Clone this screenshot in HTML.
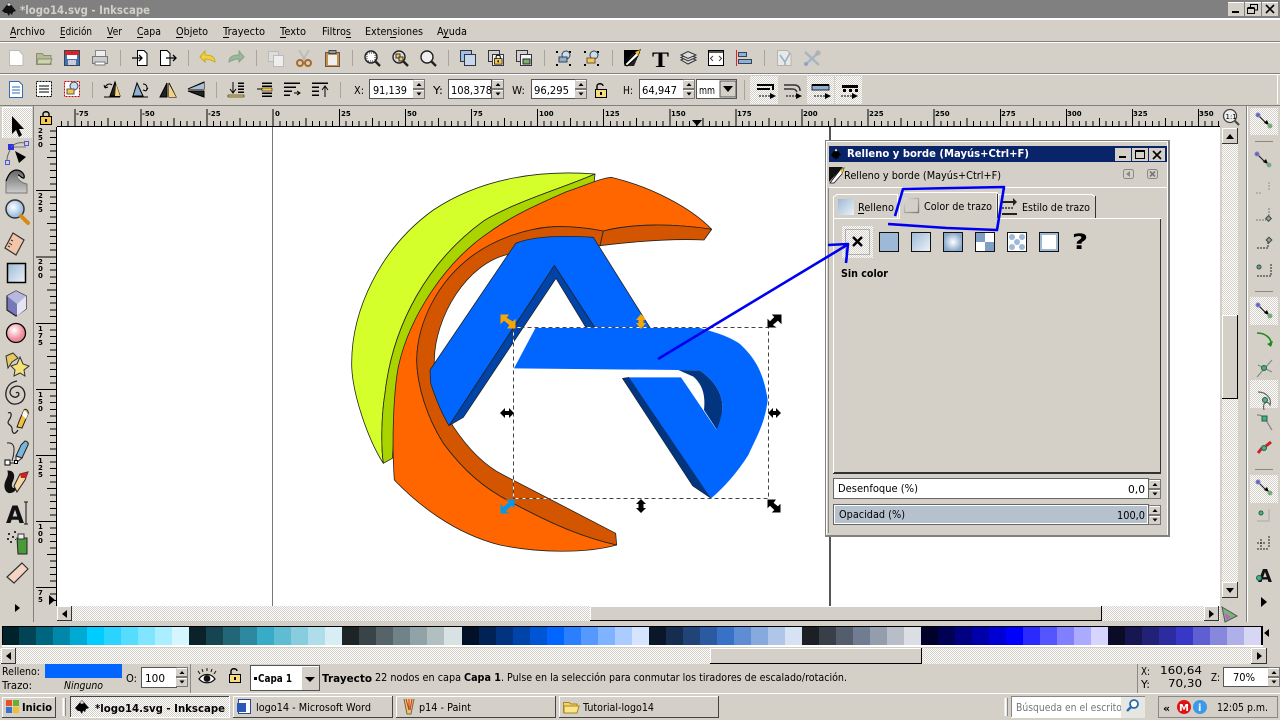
<!DOCTYPE html>
<html><head><meta charset="utf-8"><style>
html,body{margin:0;padding:0;width:1280px;height:720px;overflow:hidden;background:#d4d0c8}
svg{display:block}
text{font-family:"DejaVu Sans","Liberation Sans",sans-serif;font-size:10.5px;fill:#000;white-space:pre}
.b{font-weight:bold}
.c{shape-rendering:crispEdges}
.r{font-size:7px;font-weight:bold}
</style></head><body>
<svg width="1280" height="720" viewBox="0 0 1280 720" xmlns="http://www.w3.org/2000/svg">
<defs>
<pattern id="h" width="2" height="2" patternUnits="userSpaceOnUse"><rect width="2" height="2" fill="#fff"/><rect width="1" height="1" fill="#d4d0c8"/><rect x="1" y="1" width="1" height="1" fill="#d4d0c8"/></pattern>
<linearGradient id="g1" x1="0" y1="0" x2="1" y2="1"><stop offset="0" stop-color="#9db9d6"/><stop offset="1" stop-color="#eef3f8"/></linearGradient>
<linearGradient id="g2" x1="0" y1="0" x2="0" y2="1"><stop offset="0" stop-color="#666"/><stop offset="1" stop-color="#ccc"/></linearGradient>
<linearGradient id="g3" x1="0" y1="0" x2="1" y2="1"><stop offset="0" stop-color="#ddd"/><stop offset="1" stop-color="#777"/></linearGradient>
<radialGradient id="g4"><stop offset="0" stop-color="#fff"/><stop offset="1" stop-color="#88a8cc"/></radialGradient>
<radialGradient id="g5" cx=".4" cy=".35"><stop offset="0" stop-color="#fff"/><stop offset="1" stop-color="#f08a98"/></radialGradient>
<radialGradient id="g6" cx=".4" cy=".4"><stop offset="0" stop-color="#fff"/><stop offset="1" stop-color="#9fc0e4"/></radialGradient>
<clipPath id="ct"><rect x="57" y="106" width="1163" height="21"/></clipPath>
<clipPath id="cl"><rect x="34" y="127" width="23" height="479"/></clipPath>
<clipPath id="cy"><rect x="449" y="81" width="42" height="17"/></clipPath>
<clipPath id="cs"><rect x="1012" y="697" width="109" height="20"/></clipPath>
<g id="tt"><path class="c" stroke="#000" fill="none" d="M0.5 109V127M7.1 121V127M13.7 121V127M20.3 121V127M27 121V127M33.5 118V127M40 121V127M46.7 121V127M53.3 121V127M59.9 121V127"/></g>
<g id="tl"><path class="c" stroke="#000" fill="none" d="M36 .5H56M50 7.1H56M50 13.7H56M50 20.3H56M50 27H56M47 33.5H56M50 40H56M50 46.7H56M50 53.3H56M50 59.9H56"/></g>
<g id="sp"><rect width="12" height="20" fill="#d4d0c8"/><path d="M0 .5H11.500V9.500H0M0 10.500H11.500V19.500H0" fill="none" stroke="#777"/><path d="M1 1.500H11M1 11.500H11" stroke="#fff"/><path d="M3.500 7L6 4L8.500 7ZM3.500 13.500L6 16.500L8.500 13.500Z" fill="#000"/></g>
<g id="npo"><path d="M-5 -4L3 4" stroke="#222" stroke-width="1.200" fill="none"/><path d="M0 3L5 5L3 0Z" fill="#000"/><circle cx="-6" cy="-5" r="2" fill="#5a5af0" stroke="#88a"/><circle cx="6" cy="6" r="2" fill="#6ab06a" stroke="#8a8"/></g>
<g id="lock"><path d="M3 7V4C3 1 9 1 9 4V7" fill="none" stroke="#000" stroke-width="1.400"/><rect x=".5" y="6.500" width="11" height="8" fill="#f4c850" stroke="#000"/><rect x="5" y="9" width="2" height="3" fill="#000"/></g>
<g id="olk"><path d="M2 7V3C2 0 8 0 8 3" fill="none" stroke="#000" stroke-width="1.400"/><rect x=".5" y="6.500" width="11" height="8" fill="#f6dc7c" stroke="#000"/><rect x="5" y="9" width="2" height="3" fill="#000"/></g>
</defs>

<!-- title bar -->
<rect class="c" width="1280" height="18" fill="#808080"/>
<rect class="c" y="18" width="1280" height="2" fill="#fff"/>
<path d="M2 11L9 2L16 11L13 12L12 15L10 13L9 16L7 13L5 13Z" fill="#111"/><path d="M7 5L9 2.500L11 5L9 6Z" fill="#ddd"/>
<text x="20" y="14" class="b" style="font-size:11.5px;fill:#d4d0c8" textLength="130" lengthAdjust="spacingAndGlyphs">*logo14.svg - Inkscape</text>
<g class="c">
<rect x="1228" y="2" width="16" height="14" fill="#d4d0c8"/><rect x="1228" y="2" width="16" height="1" fill="#fff"/><rect x="1232" y="11" width="7" height="2" fill="#000"/>
<rect x="1245" y="2" width="16" height="14" fill="#d4d0c8"/><rect x="1245" y="2" width="16" height="1" fill="#fff"/>
<path d="M1250.500 8V4.500H1257.500V10H1255M1247.500 8.500H1254.500V13.500H1247.500ZM1247.500 7.500H1254.500" fill="none" stroke="#000"/>
<rect x="1262" y="2" width="16" height="14" fill="#d4d0c8"/><rect x="1262" y="2" width="16" height="1" fill="#fff"/></g>
<path d="M1266 5L1274 13M1274 5L1266 13" stroke="#000" stroke-width="1.600"/>

<!-- menu -->
<g>
<text x="10" y="35" textLength="35" lengthAdjust="spacingAndGlyphs">Archivo</text>
<text x="60" y="35" textLength="32" lengthAdjust="spacingAndGlyphs">Edición</text>
<text x="107" y="35" textLength="15" lengthAdjust="spacingAndGlyphs">Ver</text>
<text x="137" y="35" textLength="24" lengthAdjust="spacingAndGlyphs">Capa</text>
<text x="176" y="35" textLength="32" lengthAdjust="spacingAndGlyphs">Objeto</text>
<text x="223" y="35" textLength="42" lengthAdjust="spacingAndGlyphs">Trayecto</text>
<text x="280" y="35" textLength="26" lengthAdjust="spacingAndGlyphs">Texto</text>
<text x="322" y="35" textLength="29" lengthAdjust="spacingAndGlyphs">Filtros</text>
<text x="365" y="35" textLength="58" lengthAdjust="spacingAndGlyphs">Extensiones</text>
<text x="437" y="35" textLength="30" lengthAdjust="spacingAndGlyphs">Ayuda</text>
<path class="c" stroke="#000" d="M10 37.500H16M60 37.500H65M107 37.500H113M137 37.500H143M176 37.500H183M223 37.500H229M280 37.500H286M346 37.500H351M390 37.500H396M443 37.500H449"/>
</g>
<rect class="c" y="41" width="1280" height="1" fill="#808080"/><rect class="c" y="42" width="1280" height="1" fill="#fff"/>
<rect class="c" y="73" width="1280" height="1" fill="#808080"/><rect class="c" y="74" width="1280" height="1" fill="#fff"/>
<rect class="c" y="105" width="1280" height="1" fill="#808080"/>
<rect class="c" x="1277" y="75" width="1" height="29" fill="#fff"/>

<!-- toolbar 1 -->
<path class="c" stroke="#a8a49c" d="M120.500 50V66M188.500 50V66M256.500 50V66M352.500 50V66M448.500 50V66M544.500 50V66M612.500 50V66M764.500 50V66"/>
<path d="M9.500 50.500H19L23 55V65.500H9.500Z" fill="#fff" stroke="#bbb"/>
<path d="M36.500 53.500H42L44 55.500H51V64.500H36.500Z" fill="#b3bb92" stroke="#8a8f70"/><path d="M38 59H52L50 64H37Z" fill="#cfd4b0" stroke="#8a8f70"/>
<rect x="64.500" y="50.500" width="15" height="15" fill="#3f74b4" stroke="#345"/><rect x="65" y="51" width="14" height="4" fill="#d22"/><rect x="67" y="55" width="10" height="4" fill="#fff"/><rect x="68" y="60" width="8" height="5" fill="#ccd"/>
<rect x="95.500" y="50.500" width="10" height="6" fill="#eee" stroke="#888"/><rect x="92.500" y="56.500" width="15" height="7" fill="#ccc" stroke="#777"/><rect x="95" y="62" width="10" height="3" fill="#fff" stroke="#777"/>
<path d="M137.500 50.500H144L147 53.500V65.500H137.500Z" fill="#fff" stroke="#000"/><path d="M132 58H142M139 55L142 58L139 61" fill="none" stroke="#000" stroke-width="1.300"/>
<path d="M160.500 50.500H167L170 53.500V65.500H160.500Z" fill="#fff" stroke="#000"/><path d="M166 58H176M173 55L176 58L173 61" fill="none" stroke="#000" stroke-width="1.300"/>
<path d="M215 62C215 56 210 55 205 55V51L200 57L205 62V59C209 59 211 60 215 62Z" fill="#f2d23c" stroke="#c8aa26"/>
<path d="M229 62C229 56 234 55 239 55V51L244 57L239 62V59C235 59 233 60 229 62Z" fill="#9ab89a" stroke="#88a088"/>
<rect x="268.500" y="51.500" width="10" height="10" fill="#ddd" stroke="#bbb"/><rect x="273.500" y="55.500" width="10" height="11" fill="#eee" stroke="#bbb"/>
<path d="M299 50L305 60M309 50L303 60" stroke="#b8b8b8" stroke-width="1.600"/><circle cx="300" cy="63" r="3" fill="none" stroke="#a86a22" stroke-width="2"/><circle cx="308" cy="63" r="3" fill="none" stroke="#a86a22" stroke-width="2"/>
<rect x="325.500" y="52.500" width="14" height="14" fill="#c49050" stroke="#654"/><rect x="328" y="55" width="9" height="10" fill="#eee"/><rect x="329" y="50.500" width="7" height="3" fill="#999" stroke="#444"/>
<g fill="none" stroke="#222"><circle cx="371" cy="57" r="6" fill="#ddd" stroke-width="1.400"/><path d="M375 61L380 66" stroke-width="2.400"/><circle cx="399" cy="57" r="6" fill="#ddd" stroke-width="1.400"/><path d="M403 61L408 66" stroke-width="2.400"/><circle cx="427" cy="57" r="6" fill="#eee" stroke-width="1.400"/><path d="M431 61L436 66" stroke-width="2.400"/></g>
<rect x="396" y="54" width="4" height="4" fill="#f4c850" stroke="#333"/><rect x="399" y="57" width="4" height="4" fill="#f4c850" stroke="#333"/><rect x="367" y="53" width="8" height="8" fill="#fff" stroke="#333" stroke-dasharray="1 1"/>
<rect x="460.500" y="50.500" width="11" height="11" fill="#9fc0e0" stroke="#334"/><rect x="464.500" y="54.500" width="11" height="11" fill="#c5d8ec" stroke="#334"/>
<rect x="488.500" y="50.500" width="11" height="11" fill="#d4d0c8" stroke="#334"/><rect x="492.500" y="54.500" width="11" height="11" fill="#f4f4f4" stroke="#334"/><use href="#lock" transform="translate(494 54) scale(.7)"/>
<rect x="516.500" y="50.500" width="11" height="11" fill="#d4d0c8" stroke="#334"/><rect x="520.500" y="54.500" width="11" height="11" fill="#f4f4f4" stroke="#334"/><rect x="523" y="59" width="7" height="5" fill="#7cb06c" stroke="#222"/>
<path class="c" fill="#000" d="M556 51h2v2h-2zM569 51h2v2h-2zM556 64h2v2h-2zM569 64h2v2h-2zM584 51h2v2h-2zM597 51h2v2h-2zM584 64h2v2h-2zM597 64h2v2h-2z"/>
<circle cx="566" cy="55" r="4" fill="#cde" stroke="#345"/><rect x="559" y="57" width="8" height="5" fill="#8fb0d0" stroke="#345"/>
<circle cx="594" cy="55" r="4" fill="#cde" stroke="#345"/><rect x="587" y="58" width="8" height="5" fill="#f4c850" stroke="#654"/>
<path d="M624 50H640L624 65Z" fill="#000"/><path d="M624 66H634L640 52L632 54Z" fill="#222"/><path d="M625 64L637 52L640 50L638 56L627 66Z" fill="#fff" stroke="#000"/><path d="M635 52L640 50L638 56Z" fill="#f0c030"/>
<text x="652" y="67" style="font-family:'Liberation Serif',serif;font-size:22px;font-weight:bold" textLength="17" lengthAdjust="spacingAndGlyphs">T</text>
<g fill="#ddd" stroke="#333"><path d="M681 60L688 56.500L696 60L688 64Z"/><path d="M681 57.500L688 54L696 57.500L688 61Z"/><path d="M681 55L688 51.500L696 55L688 58.500Z"/></g>
<rect x="708.500" y="50.500" width="15" height="15" fill="#fff" stroke="#000"/><rect x="709" y="51" width="14" height="2" fill="#555"/><path d="M713 56L710.500 58.500L713 61M719 56L721.500 58.500L719 61" fill="none" stroke="#444"/>
<rect class="c" x="736" y="50" width="1" height="16" fill="#d22"/><rect x="738.500" y="52.500" width="8" height="4" fill="#8fb0d8" stroke="#345"/><rect x="738.500" y="59.500" width="13" height="4" fill="#8fb0d8" stroke="#345"/>
<path d="M777.500 50.500H787L791 54V65.500H777.500Z" fill="#e8e8e4" stroke="#b4b4b4"/><path d="M780 55L785 62V65M790 53L785 62" stroke="#9ab0c4" stroke-width="1.600" fill="none"/>
<path d="M805 52L819 65M819 52L805 65" stroke="#a8b4c4" stroke-width="2.400"/><circle cx="806" cy="64" r="2" fill="#8aa4cc"/><circle cx="818" cy="53" r="2" fill="none" stroke="#aaa"/>

<!-- toolbar 2 -->
<path class="c" stroke="#a8a49c" d="M92.500 82V98M216.500 82V98M340.500 82V98M744.500 80V100"/>
<path d="M9.500 81.500H19L22.500 85V97.500H9.500Z" fill="#fff" stroke="#3a6ab0"/><path d="M12 87H20M12 90H20M12 93H20" stroke="#2a6ac0"/>
<rect x="36.500" y="81.500" width="15" height="15" fill="#fff" stroke="#000" stroke-dasharray="2 1"/><path d="M39 86H49M39 89H49M39 92H49" stroke="#555" stroke-width="1.500"/>
<rect x="64.500" y="81.500" width="15" height="15" fill="#fff" stroke="#c00" stroke-dasharray="2 1"/><circle cx="74" cy="86" r="4" fill="#cde" stroke="#345"/><rect x="67" y="89" width="7" height="5" fill="#f4c850" stroke="#654"/>
<path d="M110 96H120L115 82ZM104 97H120" fill="#222" stroke="#000"/><path d="M115 96H120L116 84Z" fill="#f4d27c"/><path d="M105 88C106 84 110 83 112 85M105 88L104 85M105 88L108 87" fill="none" stroke="#000"/>
<path d="M133 96H143L137 83ZM132 97H148" fill="#8fb0d0" stroke="#000"/><path d="M143 84C147 84 148 88 146 91M146 91L143 90M146 91L148 88" fill="none" stroke="#000"/>
<path d="M167 83V97H160ZM169 83V97H176Z" fill="#222" stroke="#000"/><path d="M169 84V97H176Z" fill="#f4d27c"/>
<path d="M204 82V89H188ZM204 91V97L188 91Z" fill="#222" stroke="#000"/><path d="M204 83V89H189Z" fill="#a8c0d8"/>
<path class="c" stroke="#000" stroke-width="1.500" d="M238 83H244M238 86H244M238 89H244M238 92H244"/><path d="M233 82V92M230 89L233 93L236 89" fill="none" stroke="#000"/><rect x="228" y="95" width="16" height="2" fill="#f4c850" stroke="#000" stroke-width=".5"/>
<path class="c" stroke="#000" stroke-width="1.500" d="M262 83H272M262 86H272M262 93H272M262 96H272"/><path d="M257 89H266" stroke="#000"/><rect x="262" y="88" width="10" height="3" fill="#f4c850" stroke="#000" stroke-width=".5"/>
<path class="c" stroke="#000" stroke-width="1.500" d="M284 83H300M284 87H296M284 91H292M284 95H290"/><path d="M294 93H299M297 91L300 93L297 95" fill="none" stroke="#000"/>
<path class="c" stroke="#000" stroke-width="1.500" d="M312 83H328M312 87H319M312 91H319M312 95H319"/><path d="M325 87V97M322 90L325 86L328 90" fill="none" stroke="#000"/>
<text x="354" y="94" textLength="10" lengthAdjust="spacingAndGlyphs">X:</text>
<text x="433" y="94" textLength="10" lengthAdjust="spacingAndGlyphs">Y:</text>
<text x="512" y="94" textLength="13" lengthAdjust="spacingAndGlyphs">W:</text>
<text x="623" y="94" textLength="10" lengthAdjust="spacingAndGlyphs">H:</text>
<g class="c" fill="#fff" stroke="#555"><rect x="369.500" y="79.500" width="44" height="19"/><rect x="448.500" y="79.500" width="43" height="19"/><rect x="531.500" y="79.500" width="44" height="19"/><rect x="639.500" y="79.500" width="44" height="19"/><rect x="696.500" y="79.500" width="40" height="19"/></g>
<text x="373" y="94" textLength="34" lengthAdjust="spacingAndGlyphs">91,139</text>
<text x="451" y="94" clip-path="url(#cy)" textLength="41" lengthAdjust="spacingAndGlyphs">108,378</text>
<text x="534" y="94" textLength="35" lengthAdjust="spacingAndGlyphs">96,295</text>
<text x="642" y="94" textLength="35" lengthAdjust="spacingAndGlyphs">64,947</text>
<text x="699" y="94" textLength="16" lengthAdjust="spacingAndGlyphs">mm</text>
<use href="#sp" x="413" y="79"/><use href="#sp" x="492" y="79"/><use href="#sp" x="575" y="79"/><use href="#sp" x="683" y="79"/>
<use href="#olk" x="595" y="83"/>
<rect class="c" x="720" y="81" width="16" height="16" fill="#d4d0c8" stroke="#555"/><path d="M723 86H733L728 92Z" fill="#000"/>
<g class="c"><rect x="750" y="76" width="28" height="28" fill="url(#h)"/><rect x="807" y="76" width="27" height="28" fill="url(#h)"/><rect x="835" y="76" width="27" height="28" fill="url(#h)"/></g>
<g fill="none" stroke="#000" stroke-width="2"><path d="M757 85H773V90M757 89H770"/><path d="M784 85H794C798 85 800 87 800 91" stroke-width="1.500" stroke="#333"/><path d="M784 89H792C795 89 796 90 797 92" stroke-width="1.500" stroke="#333"/></g>
<path d="M812 85H829V90H812Z" fill="#8fb0d0" stroke="#223"/><path d="M812 85H829" stroke="#000" stroke-width="2"/>
<path d="M842 85H858V88H842Z" fill="#000"/><path class="c" fill="#000" d="M843 89h3v3h-3zM849 89h3v3h-3zM855 89h3v3h-3z"/>
<path class="c" stroke="#000" stroke-dasharray="2 1" d="M759 96H771M786 96H798M814 96H826M841 96H853"/>
<path d="M770 93L776 96L770 99ZM796 93L802 96L796 99ZM825 93L831 96L825 99ZM852 93L858 96L852 99Z" fill="#000"/>

<!-- canvas -->
<rect class="c" x="57" y="127" width="1163" height="479" fill="#fff"/>
<rect class="c" x="272" y="127" width="1" height="479" fill="#777"/>
<rect class="c" x="829" y="127" width="2" height="479" fill="#555"/>

<!-- rulers -->
<g clip-path="url(#ct)">
<use href="#tt" x="8.300"/><use href="#tt" x="74.400"/><use href="#tt" x="140.500"/><use href="#tt" x="206.600"/><use href="#tt" x="272.700"/><use href="#tt" x="338.800"/><use href="#tt" x="404.900"/><use href="#tt" x="471"/><use href="#tt" x="537.100"/><use href="#tt" x="603.200"/><use href="#tt" x="669.300"/><use href="#tt" x="735.400"/><use href="#tt" x="801.500"/><use href="#tt" x="867.600"/><use href="#tt" x="933.700"/><use href="#tt" x="999.800"/><use href="#tt" x="1065.900"/><use href="#tt" x="1132"/><use href="#tt" x="1198.100"/>
<g class="r">
<text x="76" y="116" class="r">-75</text><text x="142" y="116" class="r">-50</text><text x="208" y="116" class="r">-25</text><text x="275" y="116" class="r">0</text><text x="341" y="116" class="r">25</text><text x="407" y="116" class="r">50</text><text x="473" y="116" class="r">75</text><text x="539" y="116" class="r">100</text><text x="605" y="116" class="r">125</text><text x="671" y="116" class="r">150</text><text x="737" y="116" class="r">175</text><text x="803" y="116" class="r">200</text><text x="869" y="116" class="r">225</text><text x="935" y="116" class="r">250</text><text x="1001" y="116" class="r">275</text><text x="1067" y="116" class="r">300</text><text x="1133" y="116" class="r">325</text><text x="1199" y="116" class="r">350</text>
</g></g>
<rect class="c" x="57" y="126" width="1163" height="1" fill="#000"/>
<path d="M692 120H702L697 126Z" fill="#000"/>
<rect class="c" x="33" y="106" width="1" height="516" fill="#808080"/>
<g clip-path="url(#cl)">
<use href="#tl" y="124"/><use href="#tl" y="190"/><use href="#tl" y="256.500"/><use href="#tl" y="323"/><use href="#tl" y="389"/><use href="#tl" y="455"/><use href="#tl" y="521"/><use href="#tl" y="587"/>
<text class="r" x="38" y="133">2<tspan x="38" dy="7">5</tspan><tspan x="38" dy="7">0</tspan></text>
<text class="r" x="38" y="198">2<tspan x="38" dy="7">2</tspan><tspan x="38" dy="7">5</tspan></text>
<text class="r" x="38" y="264">2<tspan x="38" dy="7">0</tspan><tspan x="38" dy="7">0</tspan></text>
<text class="r" x="38" y="331">1<tspan x="38" dy="7">7</tspan><tspan x="38" dy="7">5</tspan></text>
<text class="r" x="38" y="397">1<tspan x="38" dy="7">5</tspan><tspan x="38" dy="7">0</tspan></text>
<text class="r" x="38" y="463">1<tspan x="38" dy="7">2</tspan><tspan x="38" dy="7">5</tspan></text>
<text class="r" x="38" y="529">1<tspan x="38" dy="7">0</tspan><tspan x="38" dy="7">0</tspan></text>
<text class="r" x="38" y="595">7<tspan x="38" dy="7">5</tspan></text>
</g>
<rect class="c" x="56" y="127" width="1" height="479" fill="#000"/>
<path d="M49 595L55 600L49 605Z" fill="#000"/>
<use href="#lock" x="40" y="110"/>

<!-- left toolbox -->
<rect class="c" x="2" y="107" width="30" height="31" fill="url(#h)"/>
<path class="c" stroke="#fff" fill="none" d="M2.500 138V107.500H32"/>
<path d="M12 116V134L16 130L19 137L22 135L19 129H24Z" fill="#000"/>
<path d="M11 147H26" stroke="#777" fill="none"/><rect x="8" y="144" width="6" height="6" fill="#3030e0"/><rect x="24.500" y="141.500" width="4" height="4" fill="none" stroke="#5555e0"/><rect x="5.500" y="160.500" width="4" height="4" fill="none" stroke="#5555e0"/><path d="M10 150C8 154 7 157 7 160M11 147C15 143 20 142 25 143" fill="none" stroke="#666"/><path d="M15 151L26 157L19 163Z" fill="#000"/>
<path d="M6 193V181C8 176 10 171 16 170C22 170 25 175 24 178C22 179 20 175 18 175C15 176 20 183 27 184V193Z" fill="url(#g2)" stroke="#777"/><path d="M6 181C8 176 10 171 16 170C22 170 25 175 24 178C22 179 20 175 18 175" fill="none" stroke="#000" stroke-width="1.200"/>
<circle cx="15" cy="209" r="9" fill="url(#g6)" stroke="#333" stroke-width="1.500"/><path d="M21 216L28 223" stroke="#d88a14" stroke-width="4" stroke-linecap="round"/>
<path d="M13 233L24 240L16 255L5 248Z" fill="#f4c4a8" stroke="#333" stroke-width="1.200"/><path d="M11 240L13 241M9 243L12 245M8 246L10 247" stroke="#333"/>
<rect x="7.500" y="263.500" width="18" height="19" fill="url(#g1)" stroke="#000" stroke-width="1.500"/>
<path d="M16 291L26 296V309L16 316L7 310V296Z" fill="#7878b8" stroke="#223" stroke-width="1.200"/><path d="M16 291L26 296L17 304L7 296Z" fill="#b8b8dc"/><path d="M17 304V316L26 309V296Z" fill="#e4e4f4"/>
<circle cx="16" cy="333" r="9.500" fill="url(#g5)" stroke="#000" stroke-width="1.300"/>
<path d="M6 356L13 353L18 358L12 362L8 368Z" fill="#e8c860" stroke="#333"/><path d="M20 357L23 364L29 366L24 370L25 376L20 373L14 376L15 370L11 366L17 364Z" fill="#f6e27a" stroke="#333"/>
<path d="M16 393C18 391 20 394 18 396C15 399 10 396 10 392C11 386 19 384 23 389C27 395 24 403 16 404C9 405 5 398 6 392C7 386 11 382 17 381" fill="none" stroke="#222" stroke-width="1.300"/>
<path d="M20 419L24 410C26 408 29 411 28 414L22 428L17 427Z" fill="#f4c040" stroke="#222"/><path d="M24 410L28 414L26 419L22 415Z" fill="#fff"/><path d="M8 413C12 411 12 416 9 420C6 425 11 424 12 428C12 433 14 436 18 430" fill="none" stroke="#222" stroke-width="1.200"/>
<path d="M21 445L25 441C27 441 29 443 28 445L22 458L16 456Z" fill="#7ab4d8" stroke="#222"/><path d="M16 456L22 458L16 463Z" fill="#eee" stroke="#222"/><path d="M7 443C14 442 16 447 12 461M8 463H15" fill="none" stroke="#222"/><rect x="5" y="460" width="5" height="5" fill="#fff" stroke="#000"/><rect x="14.500" y="460.500" width="3" height="3" fill="#fff" stroke="#000"/>
<path d="M8 471C14 471 15 476 12 482C10 488 13 490 17 487C14 494 6 495 5 487C4 480 10 478 8 471Z" fill="#111" stroke="#111"/><path d="M20 474L28 472L25 480L17 492L14 486Z" fill="#f4d8a0" stroke="#222"/><path d="M20 474L28 472L26 478L21 478Z" fill="#c22"/>
<text x="6" y="523" class="b" style="font-size:24px;fill:#111" textLength="18" lengthAdjust="spacingAndGlyphs">A</text><path d="M24 502H28M26 502V524M24 524H28" stroke="#111" fill="none"/>
<path d="M17 538H27V554H18Z" fill="#4a9a3a" stroke="#222"/><rect x="18" y="534" width="6" height="5" fill="#eee" stroke="#333"/>
<path class="c" fill="#333" d="M8 533h2v2h-2zM12 536h2v2h-2zM7 538h2v2h-2zM14 531h2v2h-2zM10 541h2v2h-2zM15 539h1v1h-1z"/>
<path d="M22 563L28 569L14 583L7 577Z" fill="#f6d4c4" stroke="#333" stroke-width="1.200"/>
<path d="M15 604L20 608L15 612Z" fill="#000"/>

<!-- logo -->
<g transform="translate(340 160) scale(.33333)" stroke="#222" stroke-width="2.400" stroke-linejoin="round">
<path fill="#d4ff2a" d="M765,42C610,30 430,50 280,150C120,265 35,450 35,610C35,700 85,840 130,910C122,850 125,760 135,700C158,495 262,305 432,182C525,125 680,80 765,42Z"/>
<path fill="#aad400" d="M765,42L762,72C680,105 600,130 500,210C400,280 300,420 240,540C190,640 165,760 157,895L130,910C122,850 125,760 135,700C158,495 262,305 432,182C525,125 680,80 765,42Z"/>
<path fill="#f60" d="M815,52C780,55 740,75 680,95C600,130 520,165 450,215C315,305 208,470 175,620C160,700 155,850 163,960C230,1030 340,1120 480,1155C600,1180 740,1180 830,1155C740,1135 650,1100 520,1030C430,985 370,930 310,850C260,770 232,680 230,600C232,490 290,370 395,290C470,235 580,200 650,200C700,200 750,205 790,213C880,190 1000,190 1115,208C1050,140 930,80 815,52Z"/>
<path fill="#d45500" d="M790,213C750,205 700,198 640,200C560,205 470,235 400,285C290,365 232,490 230,600C232,680 260,770 310,850C370,930 430,985 520,1030C650,1100 740,1135 830,1155L827,1120L490,945C430,915 380,860 340,800C300,730 280,660 283,600C285,470 380,310 505,283L540,250L780,257L790,213Z"/>
<path fill="#d45500" d="M790,213C880,190 1000,190 1115,208L1092,240C1000,235 880,245 780,257Z"/>
<path fill="#04a" d="M643,316L327,797L370,772L648,355L738,503L765,503Z"/>
<path fill="#06f" d="M527,250C570,232 650,225 760,232L930,503L765,503L643,316L327,797C305,760 285,710 272,670L270,630Z"/>
<g stroke="none">
<path fill="#03357e" stroke="#111" stroke-width="1.500" d="M847,655L867,652L1113,1015L1058,978Z"/>
<path fill="#03357e" d="M1015,630L1078,631C1110,650 1145,690 1147,735C1148,765 1140,790 1131,810L1092,750C1095,720 1095,680 1060,650Z"/>
<path fill="#06f" d="M587,503L1075,503C1120,515 1170,530 1200,552C1240,590 1270,630 1283,720C1275,790 1250,830 1225,885C1190,940 1150,985 1113,1015L867,652L1023,652L1130,810C1140,785 1148,760 1147,735C1145,690 1110,650 1078,631L1015,630L522,625Z"/>
</g></g>
<!-- selection -->
<rect x="513.500" y="327.500" width="255" height="171" fill="none" stroke="#fff" class="c"/>
<rect x="513.500" y="327.500" width="255" height="171" fill="none" stroke="#444" stroke-dasharray="4 3" class="c"/>
<g>
<path d="M501 315H508L506 318L513 322L515 320V328H508L510 325L504 320L501 323Z" fill="#f6a800" stroke="#f6a800"/>
<path d="M641 314L646 320H643.500V323H646L641 329L636 323H638.500V320H636Z" fill="#f6a800"/>
<path d="M781 315V323L778 320L772 325L775 327H768V320L770 322L775 317L773 315Z" fill="#000" stroke="#000"/>
<path d="M500 413L505 408V411H509V408L514 413L509 418V415H505V418Z" fill="#000"/>
<path d="M768 413L773 408V411H776V408L781 413L776 418V415H773V418Z" fill="#000"/>
<path d="M501 513V505L503 508L510 502L507 500H514V507L512 505L505 511L508 513Z" fill="#09e" stroke="#09e"/>
<path d="M641 499L646 504H643.500V508H646L641 513L636 508H638.500V504H636Z" fill="#000"/>
<path d="M768 500H775L773 503L778 507L780 505V512H773L775 510L770 505L768 507Z" fill="#000" stroke="#000"/>
</g>

<!-- v scrollbar -->
<rect class="c" x="1222" y="128" width="16" height="470" fill="url(#h)"/>
<g class="c"><rect x="1222" y="128" width="16" height="16" fill="#d4d0c8"/><path d="M1222.500 144V128.500H1238" stroke="#fff" fill="none"/><path d="M1237.500 128V143.500H1222" stroke="#333" fill="none"/>
<rect x="1222" y="315" width="16" height="84" fill="#d4d0c8"/><path d="M1222.500 398V315.500H1238" stroke="#fff" fill="none"/><path d="M1237.500 315V398.500H1222" stroke="#000" fill="none"/>
<rect x="1222" y="582" width="16" height="16" fill="#d4d0c8"/><path d="M1222.500 598V582.500H1238" stroke="#fff" fill="none"/><path d="M1237.500 582V597.500H1222" stroke="#333" fill="none"/></g>
<path d="M1226 139H1234L1230 134ZM1226 588H1234L1230 593Z" fill="#000"/>
<circle cx="1230" cy="116" r="6.500" fill="#eee" stroke="#444" stroke-width="1.300"/><path d="M1235 121L1239 125" stroke="#444" stroke-width="2"/><text x="1225.500" y="119" style="font-size:7px">1:1</text>

<!-- h scrollbar -->
<rect class="c" x="57" y="606" width="1163" height="15" fill="url(#h)"/>
<g class="c"><rect x="57" y="606" width="15" height="15" fill="#d4d0c8"/><path d="M57.500 621V606.500H72" stroke="#fff" fill="none"/><path d="M71.500 606V620.500H57" stroke="#333" fill="none"/>
<rect x="590" y="606" width="512" height="15" fill="#d4d0c8"/><path d="M590.500 621V606.500H1102" stroke="#fff" fill="none"/><path d="M1101.500 606V620.500H590" stroke="#000" fill="none"/>
<rect x="1204" y="606" width="15" height="15" fill="#d4d0c8"/><path d="M1204.500 621V606.500H1219" stroke="#fff" fill="none"/><path d="M1218.500 606V620.500H1204" stroke="#333" fill="none"/></g>
<path d="M67 610V618L62 614ZM1209 610V618L1214 614Z" fill="#000"/>
<path d="M1222 607L1237 616L1225 622Z" fill="#7ab47a" stroke="#555"/><path d="M1225 613L1231 617L1226 620Z" fill="#c060c0"/>

<!-- right toolbar -->
<rect class="c" x="1246" y="106" width="1" height="516" fill="#808080"/>
<rect class="c" x="1247" y="106" width="1" height="516" fill="#fff"/>
<g class="c" fill="url(#h)"><rect x="1250" y="108" width="28" height="27"/><rect x="1250" y="297" width="28" height="28"/><rect x="1250" y="380" width="28" height="28"/><rect x="1250" y="475" width="28" height="28"/></g>
<path class="c" stroke="#888" d="M1255 141.500H1273M1255 291.500H1273M1255 469.500H1273"/>
<use href="#npo" x="1264" y="120"/><use href="#npo" x="1263" y="159"/><use href="#npo" x="1264" y="310"/><use href="#npo" x="1264" y="487"/>
<path d="M1256 193H1262M1269 190V181" stroke="#8a9a8a" stroke-dasharray="2 1" fill="none"/><path d="M1256 220H1266M1269 216V208" stroke="#777" stroke-dasharray="2 1" fill="none"/><rect x="1266.500" y="216.500" width="4" height="4" fill="#8a9" stroke="#444" transform="rotate(45 1268.500 218.500)"/>
<path d="M1257 248H1268V238" stroke="#222" stroke-dasharray="2 1" fill="none"/><rect x="1267" y="238" width="4" height="4" fill="#8a9" stroke="#444" transform="rotate(45 1269 240)"/>
<path d="M1257 276H1271V264" stroke="#222" stroke-dasharray="2 1" fill="none"/><circle cx="1259" cy="267" r="2" fill="#5a9" stroke="#444"/>
<path d="M1257 333C1265 333 1272 338 1271 345" fill="none" stroke="#1a8a1a" stroke-width="1.600"/><path d="M1267 344L1271 347L1273 341" fill="#1a8a1a"/>
<path d="M1257 377L1272 360M1258 365L1272 372" stroke="#888" stroke-width="1.200"/><circle cx="1264" cy="368" r="2.500" fill="#4a9" stroke="#263"/>
<path d="M1258 392C1266 392 1272 398 1270 405C1268 400 1262 402 1264 410" fill="none" stroke="#666" stroke-width="1.200"/><circle cx="1265" cy="400" r="2.500" fill="#5a9" stroke="#263"/>
<path d="M1257 415C1265 414 1268 425 1272 430" fill="none" stroke="#888" stroke-width="1.300"/><rect x="1262" y="416" width="5" height="5" fill="#4a9" stroke="#263"/>
<path d="M1258 453L1262 448M1266 446L1271 442" stroke="#c22" stroke-width="3"/><circle cx="1264" cy="448" r="2.500" fill="#4a9" stroke="#263"/>
<path d="M1257 521H1269V509" stroke="#aaa" fill="none"/><circle cx="1261" cy="513" r="2" fill="#5a9" stroke="#263"/>
<path d="M1257 543H1265M1261 539V547M1257 549H1269M1269 536V548" stroke="#222" stroke-dasharray="2 1" fill="none"/>
<text x="1258" y="582" class="b" style="font-size:18px;fill:#111" textLength="14" lengthAdjust="spacingAndGlyphs">A</text><circle cx="1259" cy="578" r="2.500" fill="#4a9" stroke="#263"/>
<path d="M1261 597L1267 602L1261 607Z" fill="#000"/>

<!-- dialog -->
<g class="c">
<rect x="825" y="140" width="345" height="397" fill="#808080"/>
<rect x="826" y="141" width="342" height="394" fill="#fff"/>
<rect x="827" y="142" width="340" height="393" fill="#d4d0c8"/>
<rect x="829" y="146" width="338" height="16" fill="#0a246a"/>
<rect x="1115" y="148" width="16" height="13" fill="#d4d0c8"/><rect x="1132" y="148" width="16" height="13" fill="#d4d0c8"/><rect x="1149" y="148" width="16" height="13" fill="#d4d0c8"/>
<rect x="1119" y="156" width="7" height="2" fill="#000"/>
<rect x="1135.500" y="150.500" width="9" height="8" fill="none" stroke="#000"/><rect x="1135" y="150" width="10" height="2" fill="#000"/>
<rect x="829" y="187" width="338" height="1" fill="#fff"/>
<rect x="828" y="188" width="1" height="345" fill="#888"/>
<rect x="1160" y="218" width="1" height="255" fill="#333"/>
<rect x="833" y="472" width="328" height="2" fill="#333"/>
<rect x="833" y="218" width="1" height="255" fill="#fff"/>
<rect x="833" y="218" width="328" height="1" fill="#fff"/>
</g>
<path d="M1153 151L1161 159M1161 151L1153 159" stroke="#000" stroke-width="1.600"/>
<path d="M831 155L836 148L841 155L839 156L838 159L837 157.500L836 160L834.500 157.500L833 157.500Z" fill="#000"/><path d="M834.500 150.500L836 148.500L837.500 150.500L836 151.500Z" fill="#ddd"/>
<text x="847" y="157" class="b" style="fill:#fff" textLength="182" lengthAdjust="spacingAndGlyphs">Relleno y borde (Mayús+Ctrl+F)</text>
<path d="M829 167H843L829 182Z" fill="#111"/><path d="M830 183L840 170L844 168L842 174L834 183Z" fill="#fff" stroke="#000" stroke-width=".7"/><path d="M840 170L844 168L842 174Z" fill="#f0c030"/>
<text x="844" y="179" textLength="157" lengthAdjust="spacingAndGlyphs">Relleno y borde (Mayús+Ctrl+F)</text>
<rect x="1123.500" y="169.500" width="10" height="9" rx="2" fill="#d4d0c8" stroke="#888"/><path d="M1130 171V177L1126 174Z" fill="#888"/>
<rect x="1147.500" y="169.500" width="10" height="9" rx="2" fill="#d4d0c8" stroke="#888"/><path d="M1150 171.500L1155 176.500M1155 171.500L1150 176.500" stroke="#777" stroke-width="1.600"/>

<!-- tabs -->
<path class="c" d="M833.500 218V197L837 194.500H897.500V218" fill="#d4d0c8" stroke="#fff"/>
<path class="c" d="M899.500 219V195L902 192.500H997V219" fill="#d4d0c8" stroke="#fff"/><path class="c" d="M997.500 194V218" stroke="#333"/>
<path class="c" d="M998.500 218V194.500H1092L1095.500 197V218" fill="#d4d0c8" stroke="#fff"/><path class="c" d="M1095.500 196V218" stroke="#333"/>
<rect class="c" x="900" y="217" width="97" height="3" fill="#d4d0c8"/>
<rect x="838" y="199" width="16" height="16" fill="url(#g1)"/>
<rect x="904.500" y="198.500" width="14" height="14" fill="none" stroke="url(#g3)" stroke-width="1.300"/>
<path d="M1002 202H1014M1002 214H1017" stroke="#222" stroke-width="2" fill="none"/><path d="M1002 208H1014" stroke-dasharray="2 1" stroke="#333" stroke-width="1.500" fill="none"/><path d="M1013 198L1017 202L1013 206Z" fill="#222"/>
<text x="858" y="211" textLength="36" lengthAdjust="spacingAndGlyphs">Relleno</text><rect class="c" x="858" y="213" width="6" height="1"/>
<text x="924" y="210" textLength="68" lengthAdjust="spacingAndGlyphs">Color de trazo</text>
<text x="1022" y="211" textLength="68" lengthAdjust="spacingAndGlyphs">Estilo de trazo</text>

<!-- paint buttons -->
<rect class="c" x="842" y="226" width="31" height="32" fill="url(#h)"/>
<rect x="845.500" y="229.500" width="24" height="25" fill="none" stroke="#777" stroke-dasharray="1 1" class="c"/>
<path d="M853 237L862 246M862 237L853 246" stroke="#000" stroke-width="2.400"/>
<g class="c">
<rect x="879.500" y="232.500" width="19" height="19" fill="#9db9d6" stroke="#111"/>
<rect x="911.500" y="232.500" width="19" height="19" fill="url(#g1)" stroke="#111"/>
<rect x="943.500" y="232.500" width="19" height="19" fill="url(#g4)" stroke="#111"/>
<rect x="975.500" y="232.500" width="19" height="19" fill="#7f9fc4" stroke="#111"/><rect x="985" y="233" width="9" height="9" fill="#fff"/><rect x="976" y="242" width="9" height="9" fill="#fff"/>
<rect x="1007.500" y="232.500" width="19" height="19" fill="#fff" stroke="#111"/>
<rect x="1039.500" y="232.500" width="19" height="19" fill="#9db9d6" stroke="#111"/><rect x="1042" y="235" width="14" height="14" fill="#fff"/>
</g>
<g fill="#9db9d6"><circle cx="1012" cy="237" r="3"/><circle cx="1022" cy="237" r="3"/><circle cx="1017" cy="242" r="3"/><circle cx="1012" cy="247" r="3"/><circle cx="1022" cy="247" r="3"/></g>
<text x="1072" y="249" class="b" style="font-size:21px" textLength="16" lengthAdjust="spacingAndGlyphs">?</text>
<text x="841" y="277" class="b" textLength="47" lengthAdjust="spacingAndGlyphs">Sin color</text>

<!-- blur/opacity -->
<g class="c"><rect x="833.500" y="478.500" width="315" height="20" fill="#fff" stroke="#666"/>
<rect x="833.500" y="504.500" width="315" height="20" fill="#fff" stroke="#666"/><rect x="835" y="506" width="312" height="17" fill="#b5c1cc"/></g>
<use href="#sp" x="1149" y="479"/><use href="#sp" x="1149" y="505"/>
<text x="838" y="492" textLength="80" lengthAdjust="spacingAndGlyphs">Desenfoque (%)</text>
<text x="1128" y="493" textLength="17" lengthAdjust="spacingAndGlyphs">0,0</text>
<text x="839" y="518" textLength="66" lengthAdjust="spacingAndGlyphs">Opacidad (%)</text>
<text x="1117" y="519" textLength="28" lengthAdjust="spacingAndGlyphs">100,0</text>

<!-- annotation -->
<g fill="none" stroke="#0000f0" stroke-width="2.600" stroke-linejoin="round">
<path d="M895 216L903 189L1004 187L997 230L947 228L888 224"/>
<path d="M658 359L847 245"/>
<path d="M828 245L848 244L846 263"/>
</g>

<!-- palette -->
<rect class="c" x="2" y="626" width="1261" height="19" fill="#000"/>
<rect class="c" x="2" y="645" width="1261" height="2" fill="#fff"/>
<g class="c">
<rect x="3" y="627" width="16" height="18" fill="#00222b"/><rect x="19" y="627" width="17" height="18" fill="#004455"/><rect x="36" y="627" width="17" height="18" fill="#006680"/><rect x="53" y="627" width="17" height="18" fill="#0088aa"/><rect x="70" y="627" width="17" height="18" fill="#00aad4"/><rect x="87" y="627" width="17" height="18" fill="#00ccff"/><rect x="104" y="627" width="17" height="18" fill="#2ad4ff"/><rect x="121" y="627" width="17" height="18" fill="#55ddff"/><rect x="138" y="627" width="17" height="18" fill="#80e5ff"/><rect x="155" y="627" width="17" height="18" fill="#aaeeff"/><rect x="172" y="627" width="17" height="18" fill="#d5f6ff"/>
<rect x="189" y="627" width="17" height="18" fill="#0b2228"/><rect x="206" y="627" width="17" height="18" fill="#164450"/><rect x="223" y="627" width="17" height="18" fill="#216778"/><rect x="240" y="627" width="17" height="18" fill="#2c89a0"/><rect x="257" y="627" width="17" height="18" fill="#37abc8"/><rect x="274" y="627" width="17" height="18" fill="#5fbcd3"/><rect x="291" y="627" width="17" height="18" fill="#87cdde"/><rect x="308" y="627" width="17" height="18" fill="#afdde9"/><rect x="325" y="627" width="17" height="18" fill="#d7eef4"/>
<rect x="342" y="627" width="17" height="18" fill="#1c2426"/><rect x="359" y="627" width="17" height="18" fill="#394448"/><rect x="376" y="627" width="17" height="18" fill="#566469"/><rect x="393" y="627" width="17" height="18" fill="#6f8389"/><rect x="410" y="627" width="17" height="18" fill="#91a3a7"/><rect x="427" y="627" width="17" height="18" fill="#b1bfc1"/><rect x="444" y="627" width="18" height="18" fill="#d9e2e3"/>
<rect x="462" y="627" width="17" height="18" fill="#001128"/><rect x="479" y="627" width="17" height="18" fill="#002255"/><rect x="496" y="627" width="17" height="18" fill="#003380"/><rect x="513" y="627" width="17" height="18" fill="#0044aa"/><rect x="530" y="627" width="17" height="18" fill="#0055d4"/><rect x="547" y="627" width="17" height="18" fill="#0066ff"/><rect x="564" y="627" width="17" height="18" fill="#2a7fff"/><rect x="581" y="627" width="17" height="18" fill="#5599ff"/><rect x="598" y="627" width="17" height="18" fill="#80b3ff"/><rect x="615" y="627" width="17" height="18" fill="#aaccff"/><rect x="632" y="627" width="17" height="18" fill="#d5e5ff"/>
<rect x="649" y="627" width="17" height="18" fill="#0b1728"/><rect x="666" y="627" width="17" height="18" fill="#162d50"/><rect x="683" y="627" width="17" height="18" fill="#214478"/><rect x="700" y="627" width="17" height="18" fill="#2c5aa0"/><rect x="717" y="627" width="17" height="18" fill="#3771c8"/><rect x="734" y="627" width="17" height="18" fill="#5f8dd3"/><rect x="751" y="627" width="17" height="18" fill="#87aade"/><rect x="768" y="627" width="17" height="18" fill="#afc6e9"/><rect x="785" y="627" width="17" height="18" fill="#d7e3f4"/>
<rect x="802" y="627" width="17" height="18" fill="#1c1f24"/><rect x="819" y="627" width="17" height="18" fill="#393f48"/><rect x="836" y="627" width="17" height="18" fill="#535d6c"/><rect x="853" y="627" width="17" height="18" fill="#6f7c91"/><rect x="870" y="627" width="17" height="18" fill="#939dac"/><rect x="887" y="627" width="17" height="18" fill="#b7bec8"/><rect x="904" y="627" width="17" height="18" fill="#dbdee3"/>
<rect x="921" y="627" width="17" height="18" fill="#00002b"/><rect x="938" y="627" width="17" height="18" fill="#000055"/><rect x="955" y="627" width="17" height="18" fill="#000080"/><rect x="972" y="627" width="17" height="18" fill="#0000aa"/><rect x="989" y="627" width="17" height="18" fill="#0000d4"/><rect x="1006" y="627" width="17" height="18" fill="#0000ff"/><rect x="1023" y="627" width="17" height="18" fill="#2a2aff"/><rect x="1040" y="627" width="17" height="18" fill="#5555ff"/><rect x="1057" y="627" width="17" height="18" fill="#8080ff"/><rect x="1074" y="627" width="17" height="18" fill="#aaaaff"/><rect x="1091" y="627" width="17" height="18" fill="#d5d5ff"/>
<rect x="1108" y="627" width="17" height="18" fill="#0b0b28"/><rect x="1125" y="627" width="17" height="18" fill="#161650"/><rect x="1142" y="627" width="17" height="18" fill="#212178"/><rect x="1159" y="627" width="17" height="18" fill="#2c2ca0"/><rect x="1176" y="627" width="17" height="18" fill="#3737c8"/><rect x="1193" y="627" width="17" height="18" fill="#5f5fd3"/><rect x="1210" y="627" width="17" height="18" fill="#8787de"/><rect x="1227" y="627" width="17" height="18" fill="#afafe9"/><rect x="1244" y="627" width="17" height="18" fill="#d7d7f4"/>
</g>
<path d="M1269 629V637L1264 633Z" fill="#000"/>

<!-- palette scrollbar -->
<rect class="c" y="648" width="1267" height="16" fill="url(#h)"/>
<g class="c"><rect x="1" y="648" width="15" height="16" fill="#d4d0c8"/><path d="M1.500 664V648.500H16" stroke="#fff" fill="none"/><path d="M15.500 648V663.500H1" stroke="#333" fill="none"/>
<rect x="710" y="648" width="212" height="16" fill="#d4d0c8"/><path d="M710.500 664V648.500H922" stroke="#fff" fill="none"/><path d="M921.500 648V663.500H710" stroke="#000" fill="none"/>
<rect x="1251" y="648" width="16" height="16" fill="#d4d0c8"/><path d="M1251.500 664V648.500H1267" stroke="#fff" fill="none"/><path d="M1266.500 648V663.500H1251" stroke="#333" fill="none"/></g>
<path d="M11 652V660L6 656ZM1257 652V660L1262 656Z" fill="#000"/>

<!-- status -->
<text x="2" y="675" textLength="38" lengthAdjust="spacingAndGlyphs">Relleno:</text>
<text x="2" y="689" textLength="30" lengthAdjust="spacingAndGlyphs">Trazo:</text>
<rect class="c" x="45" y="664" width="77" height="14" fill="#06f"/>
<text x="64" y="689" style="font-style:italic" textLength="39" lengthAdjust="spacingAndGlyphs">Ninguno</text>
<text x="126" y="682" textLength="11" lengthAdjust="spacingAndGlyphs">O:</text>
<rect class="c" x="141.500" y="667.500" width="35" height="20" fill="#fff" stroke="#555"/>
<text x="145" y="682" textLength="20" lengthAdjust="spacingAndGlyphs">100</text>
<use href="#sp" x="176" y="667"/>
<rect class="c" x="190" y="664" width="1" height="29" fill="#888"/>
<path d="M199 679C203 673 211 673 215 679C211 684 203 684 199 679Z" fill="#fff" stroke="#111" stroke-width="1.300"/><circle cx="207" cy="678.500" r="3.400" fill="#111"/><path d="M200 674L198 671M203 672L202 669M207 671V668M211 672L212 669M214 674L216 671" stroke="#111"/>
<use href="#olk" x="229" y="668"/>
<rect class="c" x="250.500" y="665.500" width="69" height="25" fill="#fff" stroke="#555"/>
<rect class="c" x="302" y="667" width="17" height="23" fill="#d4d0c8"/><path d="M305 677H315L310 682Z" fill="#000"/>
<rect class="c" x="254" y="677" width="3" height="3"/>
<text x="258" y="682" class="b" textLength="34" lengthAdjust="spacingAndGlyphs">Capa 1</text>
<text x="322" y="682" class="b" textLength="50" lengthAdjust="spacingAndGlyphs">Trayecto</text>
<text x="375" y="681" textLength="86" lengthAdjust="spacingAndGlyphs">22 nodos en capa</text>
<text x="464" y="681" class="b" textLength="37" lengthAdjust="spacingAndGlyphs">Capa 1</text>
<text x="501" y="681" textLength="346" lengthAdjust="spacingAndGlyphs">. Pulse en la selección para conmutar los tiradores de escalado/rotación.</text>
<rect class="c" x="1137" y="664" width="1" height="29" fill="#888"/>
<text x="1141" y="675" textLength="9" lengthAdjust="spacingAndGlyphs">X:</text>
<text x="1141" y="688" textLength="9" lengthAdjust="spacingAndGlyphs">Y:</text>
<text x="1160" y="674" textLength="42" lengthAdjust="spacingAndGlyphs">160,64</text>
<text x="1168" y="687" textLength="34" lengthAdjust="spacingAndGlyphs">70,30</text>
<text x="1211" y="681" textLength="9" lengthAdjust="spacingAndGlyphs">Z:</text>
<rect class="c" x="1223.500" y="667.500" width="45" height="19" fill="#fff" stroke="#555"/>
<text x="1233" y="681" textLength="22" lengthAdjust="spacingAndGlyphs">70%</text>
<use href="#sp" x="1268" y="667"/>

<!-- taskbar -->
<rect class="c" y="693" width="1280" height="1" fill="#fff"/>
<g class="c">
<rect x="2" y="697" width="54" height="21" fill="#d4d0c8"/><path d="M2.500 717V697.500H56" stroke="#fff" fill="none"/><path d="M55.500 697V717.500H2" stroke="#444" fill="none"/>
<path d="M63.500 698V716" stroke="#fff" stroke-width="2"/><path d="M65.500 698V716" stroke="#888"/>
<rect x="70" y="696" width="160" height="22" fill="url(#h)"/><path d="M70.500 717V696.500H230" stroke="#444" fill="none"/><path d="M229.500 696V717.500H70" stroke="#fff" fill="none"/>
<rect x="233" y="696" width="160" height="22" fill="#d4d0c8"/><path d="M233.500 717V696.500H393" stroke="#fff" fill="none"/><path d="M392.500 696V717.500H233" stroke="#444" fill="none"/>
<rect x="396" y="696" width="160" height="22" fill="#d4d0c8"/><path d="M396.500 717V696.500H556" stroke="#fff" fill="none"/><path d="M555.500 696V717.500H396" stroke="#444" fill="none"/>
<rect x="559" y="696" width="160" height="22" fill="#d4d0c8"/><path d="M559.500 717V696.500H719" stroke="#fff" fill="none"/><path d="M718.500 696V717.500H559" stroke="#444" fill="none"/>
<rect x="6" y="700" width="6" height="6" fill="#e8502a"/><rect x="13" y="700" width="6" height="6" fill="#6cae30"/><rect x="6" y="707" width="6" height="6" fill="#3a72d0"/><rect x="13" y="707" width="6" height="6" fill="#f0c030"/>
<rect x="238.500" y="699.500" width="12" height="14" fill="#fff" stroke="#2a4a90"/><rect x="237" y="703" width="9" height="9" fill="#2a5ab8"/>
</g>
<text x="22" y="711" class="b" textLength="30" lengthAdjust="spacingAndGlyphs">Inicio</text>
<path d="M75 708L82 700L89 708L86 709L85 712L83 710.500L82 714L80 711L78 711Z" fill="#000"/><path d="M80 703L82 700.500L84 703L82 704Z" fill="#ddd"/>
<text x="95" y="712" class="b" textLength="130" lengthAdjust="spacingAndGlyphs">*logo14.svg - Inkscape</text>
<text x="256" y="711" textLength="115" lengthAdjust="spacingAndGlyphs">logo14 - Microsoft Word</text>
<path d="M404 699L407 714H411L414 699" fill="#e8c860" stroke="#765"/><path d="M406 699L409 710M409 699V710M412 699L410 710" stroke="#c33"/>
<text x="419" y="711" textLength="52" lengthAdjust="spacingAndGlyphs">p14 - Paint</text>
<path d="M563.500 702.500H569L571 704H577V712.500H563.500Z" fill="#f6d466" stroke="#a88620"/><path d="M564 706H579L577 713H564Z" fill="#fbe58c" stroke="#a88620"/>
<text x="583" y="711" textLength="71" lengthAdjust="spacingAndGlyphs">Tutorial-logo14</text>
<path class="c" d="M1005.500 698V716" stroke="#fff" stroke-width="2"/><path class="c" d="M1007.500 698V716" stroke="#888"/>
<rect class="c" x="1011" y="696" width="110" height="22" fill="#fff"/>
<rect class="c" x="1121" y="696" width="24" height="22" fill="#e6e6e2"/>
<path class="c" d="M1011.500 717V696.500H1145" stroke="#888" fill="none"/>
<text x="1016" y="711" clip-path="url(#cs)" style="fill:#777" textLength="118" lengthAdjust="spacingAndGlyphs">Búsqueda en el escritorio</text>
<circle cx="1134" cy="704" r="4" fill="#fff" stroke="#2a6ab0" stroke-width="1.800"/><path d="M1131 707L1127 711" stroke="#2a6ab0" stroke-width="2.400"/>
<rect class="c" x="1158.500" y="696.500" width="119" height="21" fill="#d4d0c8" stroke="#888"/>
<text x="1163" y="712" class="b" style="font-size:11px">«</text>
<circle cx="1184" cy="707" r="7" fill="#e01010"/><text x="1179" y="711" class="b" style="font-size:10px;fill:#fff">M</text>
<circle cx="1200" cy="707" r="7" fill="#3a9ae8"/><text x="1198" y="711" class="b" style="font-size:10px;fill:#fff">i</text>
<text x="1217" y="711" textLength="51" lengthAdjust="spacingAndGlyphs">12:05 p.m.</text>
</svg>
</body></html>
